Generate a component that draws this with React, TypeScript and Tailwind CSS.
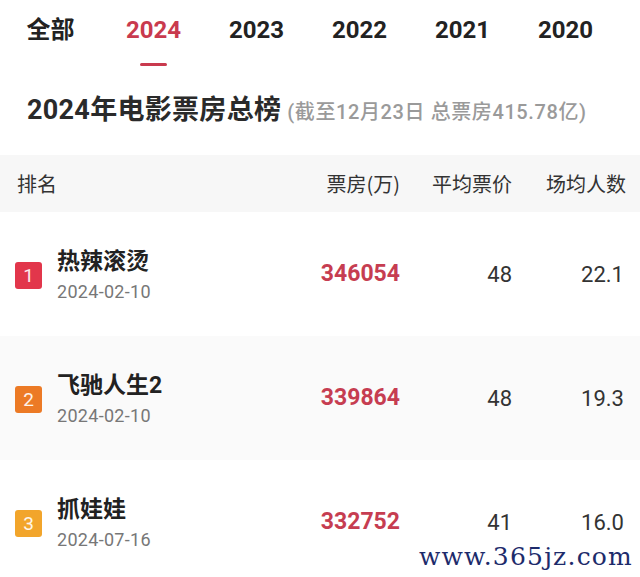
const tabs = ['全部', '2024', '2023', '2022', '2021', '2020'];

const movies = [
  { rank: 1, name: '热辣滚烫', date: '2024-02-10', box: '346054', price: '48', avg: '22.1', badge: 'bg-[#e2364b]', row: 'bg-white' },
  { rank: 2, name: '飞驰人生2', date: '2024-02-10', box: '339864', price: '48', avg: '19.3', badge: 'bg-[#ec7a25]', row: 'bg-[#fafafa]' },
  { rank: 3, name: '抓娃娃', date: '2024-07-16', box: '332752', price: '41', avg: '16.0', badge: 'bg-[#f2a52b]', row: 'bg-white' },
];

const font = 'font-["Noto_Sans_CJK_SC",sans-serif]';
const num = 'font-["Roboto","Noto_Sans_CJK_SC",sans-serif]';

export default function App() {
  return (
    <div className={`relative w-[640px] h-[577px] overflow-hidden bg-white ${font}`}>
      {/* Year tabs */}
      <div className="flex h-[80px] -ml-px">
        {tabs.map((t, i) => (
          <div key={t} className="w-[103px] shrink-0 flex flex-col items-center pt-[12px]">
            <span
              className={`text-[24px] leading-[36px] font-bold ${num} ${
                i === 1 ? 'text-[#c93a4e]' : 'text-[#222]'
              }`}
            >
              {t}
            </span>
            {i === 1 && <span className="mt-[15px] w-[27px] h-[3px] rounded-full bg-[#c93a4e]" />}
          </div>
        ))}
      </div>

      {/* Title */}
      <div className="flex items-baseline pl-[27px] pt-[11px] h-[75px]">
        <h1 className={`text-[27px] leading-[38px] font-bold text-[#2a2a2a] tracking-[0.3px] ${num}`}>
          2024年电影票房总榜
        </h1>
        <span className={`ml-[6px] text-[20px] font-medium text-[#9a9a9a] tracking-[0.6px] ${num}`}>
          (截至12月23日 总票房415.78亿)
        </span>
      </div>

      {/* Table header */}
      <div className="flex items-center h-[57px] bg-[#f7f7f7] text-[20px] text-[#333]">
        <div className="pl-[17px] flex-1">排名</div>
        <div className="w-[100px] text-right">票房(万)</div>
        <div className="w-[112px] text-right">平均票价</div>
        <div className="w-[114px] text-right">场均人数</div>
        <div className="w-[14px]" />
      </div>

      {/* Rows */}
      {movies.map((m) => (
        <div key={m.rank} className={`flex items-center h-[124px] ${m.row}`}>
          <div className="flex items-center flex-1 pl-[15px] pt-[3px]">
            <span
              className={`w-[27px] h-[27px] rounded-[3px] ${m.badge} text-white/90 text-[19px] leading-[27px] text-center ${num}`}
            >
              {m.rank}
            </span>
            <div className="ml-[15px] flex flex-col">
              <span className={`text-[23px] leading-[30px] font-bold text-[#222] ${num}`}>{m.name}</span>
              <span className={`mt-[3px] text-[18px] leading-[24px] text-[#777] tracking-[0.3px] ${num}`}>{m.date}</span>
            </div>
          </div>
          <div className={`w-[100px] text-right text-[23px] font-bold text-[#c63d51] ${num}`}>{m.box}</div>
          <div className={`w-[112px] text-right text-[22px] text-[#333] ${num}`}>{m.price}</div>
          <div className={`w-[112px] text-right text-[22px] text-[#333] pr-[16px] box-content ${num}`}>{m.avg}</div>
        </div>
      ))}

      {/* Watermark */}
      <div className='absolute right-[7px] bottom-[5px] text-[25px] leading-[30px] text-[#1d2b6b] font-["DejaVu_Serif",serif] tracking-[1.2px]'>
        www.365jz.com
      </div>
    </div>
  );
}
